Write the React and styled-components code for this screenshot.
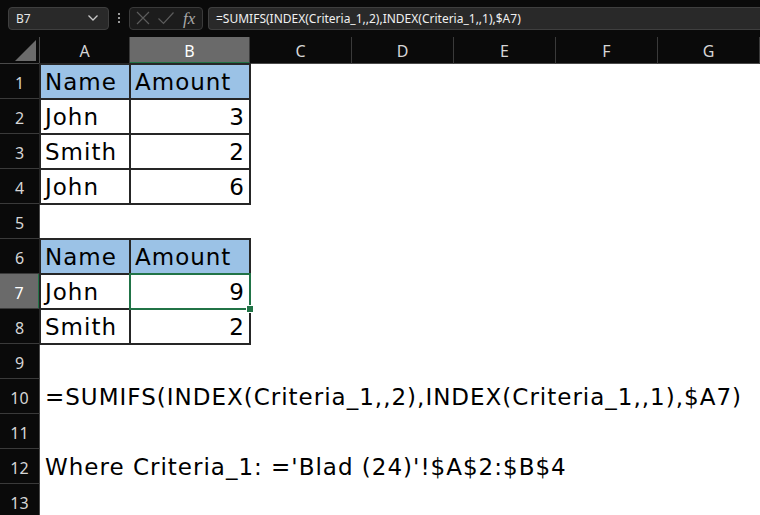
import React from 'react'
import styled, { createGlobalStyle } from 'styled-components'

const GlobalStyle = createGlobalStyle`
    html, body { margin: 0; padding: 0; background: #ffffff; }
    body { width: 760px; height: 515px; overflow: hidden; }
`

const COLS = ['A', 'B', 'C', 'D', 'E', 'F', 'G']

const rows = [
    { cells: [{ v: 'Name', head: true }, { v: 'Amount', head: true }] },
    { cells: [{ v: 'John' }, { v: '3', num: true }] },
    { cells: [{ v: 'Smith' }, { v: '2', num: true }] },
    { cells: [{ v: 'John' }, { v: '6', num: true }] },
    null,
    { cells: [{ v: 'Name', head: true }, { v: 'Amount', head: true }] },
    { cells: [{ v: 'John' }, { v: '9', num: true, sel: true }], active: true },
    { cells: [{ v: 'Smith' }, { v: '2', num: true }] },
    null,
    { text: '=SUMIFS(INDEX(Criteria_1,,2),INDEX(Criteria_1,,1),$A7)' },
    null,
    { text: "Where Criteria_1: ='Blad (24)'!$A$2:$B$4" },
    null,
]

const App = () => {
    return (
        <Window>
            <GlobalStyle />
            <Toolbar>
                <NameBox>
                    <span>B7</span>
                    <svg width="12" height="8" viewBox="0 0 12 8">
                        <path d="M1.5 1.5 L6 6 L10.5 1.5" fill="none" stroke="#c8c8c8" strokeWidth="1.3" />
                    </svg>
                </NameBox>
                <Dots>
                    <i /><i /><i />
                </Dots>
                <EditBox>
                    <svg width="16" height="16" viewBox="0 0 16 16">
                        <path d="M2 2 L14 14 M14 2 L2 14" stroke="#5c5c5c" strokeWidth="1.2" />
                    </svg>
                    <svg width="18" height="16" viewBox="0 0 18 16">
                        <path d="M1.5 8.5 L6.5 13.5 L16.5 2.5" fill="none" stroke="#5c5c5c" strokeWidth="1.2" />
                    </svg>
                    <Fx>fx</Fx>
                </EditBox>
                <FormulaInput>=SUMIFS(INDEX(Criteria_1,,2),INDEX(Criteria_1,,1),$A7)</FormulaInput>
            </Toolbar>
            <Sheet>
                <Corner>
                    <svg width="21" height="21" viewBox="0 0 21 21">
                        <path d="M21 0 L21 21 L0 21 Z" fill="#6b6b6b" />
                    </svg>
                </Corner>
                {COLS.map(c => (
                    <ColHead key={c} $active={c === 'B'}>{c}</ColHead>
                ))}
                {rows.map((row, i) => (
                    <React.Fragment key={i}>
                        <RowHead $active={row && row.active}>{i + 1}</RowHead>
                        {row && row.text && <LongText>{row.text}</LongText>}
                        {row && row.cells && row.cells.map((c, j) => (
                            <Cell key={j} $head={c.head} $num={c.num} $boxed>
                                {c.v}
                                {c.sel && <Selection><Handle /></Selection>}
                            </Cell>
                        ))}
                        {row && row.cells && <Blank $span={5} />}
                        {!row && <Blank $span={7} />}
                    </React.Fragment>
                ))}
            </Sheet>
        </Window>
    )
}

const Window = styled.div`
    width: 760px;
    height: 515px;
    overflow: hidden;
    background: #ffffff;
`

const Toolbar = styled.div`
    display: flex;
    align-items: center;
    height: 37px;
    padding: 0 0 1px 8px;
    box-sizing: border-box;
    background: #0a0a0a;
`

const NameBox = styled.div`
    display: flex;
    align-items: center;
    justify-content: space-between;
    width: 101px;
    height: 23px;
    box-sizing: border-box;
    padding: 0 9px 0 7px;
    background: #292929;
    border: 1px solid #3f3f3f;
    border-radius: 4px;
    color: #e6e6e6;
    font: 12px "Noto Sans", "Liberation Sans", sans-serif;
`

const Dots = styled.div`
    display: flex;
    flex-direction: column;
    gap: 2px;
    width: 20px;
    align-items: center;
    i {
        width: 2px;
        height: 2px;
        background: #9a9a9a;
    }
`

const EditBox = styled.div`
    display: flex;
    align-items: center;
    gap: 6px;
    width: 74px;
    height: 23px;
    box-sizing: border-box;
    padding: 0 4px 0 5px;
    background: #1c1c1c;
    border: 1px solid #3a3a3a;
    border-radius: 4px;
`

const Fx = styled.span`
    font: italic 17px "Liberation Serif", "DejaVu Serif", serif;
    color: #a8a8a8;
    margin-left: 2px;
    line-height: 1;
`

const FormulaInput = styled.div`
    flex: 1;
    height: 23px;
    margin-left: 5px;
    box-sizing: border-box;
    padding: 0 7px;
    display: flex;
    align-items: center;
    background: #292929;
    border: 1px solid #3f3f3f;
    border-right: none;
    border-radius: 4px 0 0 4px;
    color: #f0f0f0;
    font: 12px "Noto Sans", "Liberation Sans", sans-serif;
    white-space: nowrap;
`

const Sheet = styled.div`
    display: grid;
    grid-template-columns: 40px 90px 120px 102px 102px 102px 102px 102px;
    grid-template-rows: 27px repeat(13, 35px);
`

const Corner = styled.div`
    background: #0a0a0a;
    border-right: 1px solid #4a4a4a;
    border-bottom: 1px solid #4a4a4a;
    display: flex;
    align-items: flex-end;
    justify-content: flex-end;
    padding: 0 3px 2px 0;
`

const ColHead = styled.div`
    display: flex;
    align-items: center;
    justify-content: center;
    background: ${p => (p.$active ? '#6a6a6a' : '#0a0a0a')};
    color: ${p => (p.$active ? '#ffffff' : '#d6d6d6')};
    border-right: 1px solid #3a3a3a;
    border-bottom: ${p => (p.$active ? '2px solid #217346' : '1px solid #4a4a4a')};
    font: 16px "Noto Sans", "Liberation Sans", sans-serif;
    padding-top: 2px;
`

const RowHead = styled.div`
    display: flex;
    align-items: flex-end;
    justify-content: center;
    padding-bottom: 4px;
    background: ${p => (p.$active ? '#6a6a6a' : '#0a0a0a')};
    color: ${p => (p.$active ? '#ffffff' : '#d6d6d6')};
    border-bottom: 1px solid #3a3a3a;
    border-right: ${p => (p.$active ? '2px solid #217346' : '1px solid #4a4a4a')};
    font: 16px "Noto Sans", "Liberation Sans", sans-serif;
`

const cellFont = `
    font-family: "DejaVu Sans", "Liberation Sans", sans-serif;
    font-size: 23px;
    letter-spacing: 1px;
    color: #000000;
`

const Cell = styled.div`
    position: relative;
    display: flex;
    align-items: flex-end;
    justify-content: ${p => (p.$num ? 'flex-end' : 'flex-start')};
    padding: 0 5px 5px 5px;
    background: ${p => (p.$head ? '#9bc2e6' : '#ffffff')};
    outline: ${p => (p.$boxed ? '2px solid #262626' : 'none')};
    outline-offset: -1px;
    line-height: 1;
    ${cellFont}
`

const LongText = styled.div`
    grid-column: 2 / -1;
    display: flex;
    align-items: flex-end;
    padding: 0 0 5px 5px;
    white-space: nowrap;
    line-height: 1;
    ${cellFont}
`

const Blank = styled.div`
    grid-column: span ${p => p.$span};
    background: #ffffff;
`

const Selection = styled.div`
    position: absolute;
    inset: -1px -1px -1px -1px;
    border: 2px solid #217346;
    z-index: 2;
`

const Handle = styled.div`
    position: absolute;
    right: -5px;
    bottom: -5px;
    width: 6px;
    height: 6px;
    background: #217346;
    border: 1px solid #ffffff;
`

export default App
